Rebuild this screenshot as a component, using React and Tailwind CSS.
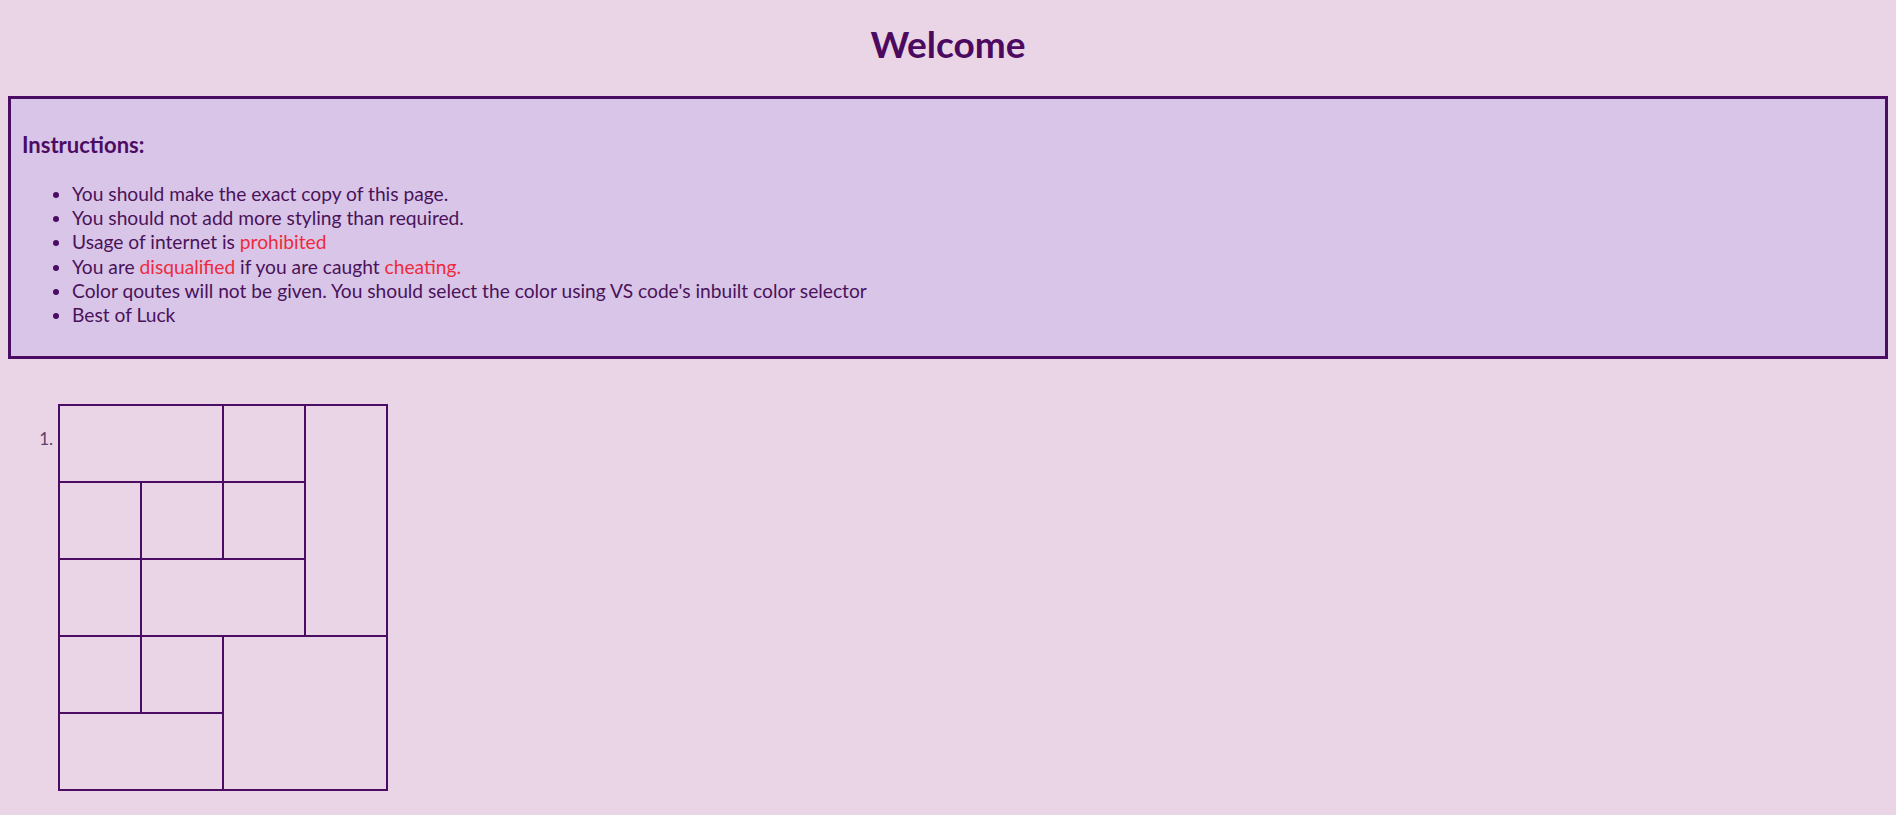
import React from 'react';

const rules = [
  <>You should make the exact copy of this page.</>,
  <>You should not add more styling than required.</>,
  <>Usage of internet is <span className="text-[#ef2a3c]">prohibited</span></>,
  <>You are <span className="text-[#ef2a3c]">disqualified</span> if you are caught <span className="text-[#ef2a3c]">cheating.</span></>,
  <>Color qoutes will not be given. You should select the color using VS code's inbuilt color selector</>,
  <>Best of Luck</>,
];

// cell spans for the 4x5 grid, in reading order
const cells = [
  'col-span-2', '', 'row-span-3',
  '', '', '',
  '', 'col-span-2',
  '', '', 'col-span-2 row-span-2',
  'col-span-2',
];

const App = () => {
  return (
    <div className="min-h-screen bg-[#ead5e6] px-2 text-[#4a1259] font-['Lato','Open_Sans',sans-serif]">
      {/* Title */}
      <h1 className="h-[96px] pt-[24px] text-center text-[37px] font-bold leading-[40px] text-[#4b0a60]">
        Welcome
      </h1>

      {/* Instructions */}
      <div className="h-[263px] border-[3px] border-[#4b0d63] bg-[#d8c5e8] px-[11px] pt-[34px]">
        <h3 className="text-[22px] font-bold leading-[24px] text-[#4b0d63]">Instructions:</h3>
        <ul className="mt-[25px] list-disc pl-[50px] text-[19.2px] leading-[24.2px] marker:text-[#4b0d63]">
          {rules.map((r, i) => (
            <li key={i}>{r}</li>
          ))}
        </ul>
      </div>

      {/* Layout exercise */}
      <div className="mt-[45px] flex">
        <div className="w-[50px] pr-[5px] pt-[25px] text-right text-[17px] leading-[20px] text-[#5e3f6e]">1.</div>
        <div className="grid grid-cols-[repeat(4,82px)] grid-rows-[repeat(5,77px)] border-l-2 border-t-2 border-[#4b0d63]">
          {cells.map((c, i) => (
            <div key={i} className={`border-b-2 border-r-2 border-[#4b0d63] ${c}`} />
          ))}
        </div>
      </div>
    </div>
  );
};

export default App;
